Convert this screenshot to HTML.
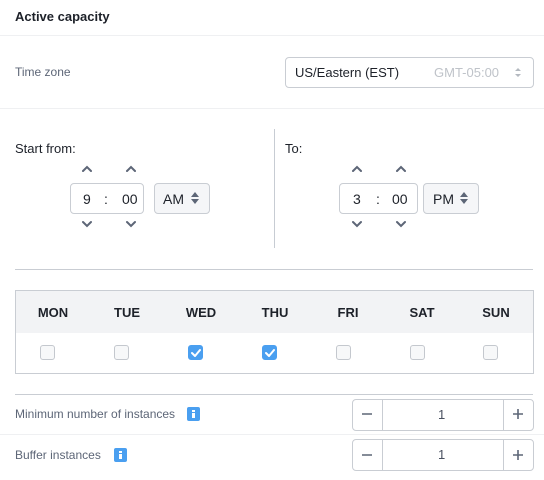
<!DOCTYPE html>
<html><head><style>
*{margin:0;padding:0;box-sizing:border-box}
body{width:544px;height:480px;background:#fff;font-family:"Liberation Sans",sans-serif;position:relative;overflow:hidden;color:#1d2129}
.a{position:absolute}
.hl{position:absolute;height:1px;background:#e9ebee}
.box{position:absolute;border:1px solid #c9cdd3;border-radius:4px;background:#fff}
.t{position:absolute;white-space:nowrap;line-height:1}
.cb{position:absolute;width:15px;height:15px;border:1px solid #c4c8ce;border-radius:3px;background:#f7f8f9;top:345px}
.cb.on{background:#4a9ff0;border-color:#4a9ff0}
.day{position:absolute;top:305px;font-weight:bold;font-size:13px;width:60px;text-align:center}
.info{position:absolute;width:13px;height:14px;background:#4a9ff0;border-radius:2px}
.info:before{content:"";position:absolute;left:5px;top:3px;width:3px;height:2px;background:#fff}
.info:after{content:"";position:absolute;left:5px;top:6px;width:3px;height:5px;background:#fff}
</style></head><body>
<div class="t" style="left:15px;top:10px;font-weight:bold;font-size:13px">Active capacity</div>
<div class="hl" style="left:0;top:35px;width:544px;background:#eff0f2"></div>
<div class="t" style="left:15px;top:66px;font-size:12px;color:#5d6677">Time zone</div>
<div class="box" style="left:285px;top:57px;width:249px;height:31px"></div>
<div class="t" style="left:295px;top:66px;font-size:13px">US/Eastern (EST)</div>
<div class="t" style="left:434px;top:66px;font-size:13px;color:#bfc3c9">GMT-05:00</div>
<svg class="a" style="left:514px;top:67px" width="8" height="11"><path d="M1 4L4 1L7 4Z M1 7L4 10L7 7Z" fill="#b4b9c0"/></svg>
<div class="hl" style="left:0;top:108px;width:544px;background:#eff0f2"></div>
<div class="a" style="left:274px;top:129px;width:1px;height:119px;background:#c7ccd3"></div>
<div class="t" style="left:15px;top:142px;font-size:13px">Start from:</div>
<div class="t" style="left:285px;top:142px;font-size:13px">To:</div>

<svg class="a" style="left:0;top:0" width="544" height="240">
<g fill="none" stroke="#5d6677" stroke-width="2" stroke-linecap="round">
<path d="M83 171l4-4 4 4M127 171l4-4 4 4M353 171l4-4 4 4M397 171l4-4 4 4"/>
<path d="M83 222l4 4 4-4M127 222l4 4 4-4M353 222l4 4 4-4M397 222l4 4 4-4"/>
</g></svg>

<div class="box" style="left:70px;top:183px;width:74px;height:31px"></div>
<div class="t" style="left:83px;top:192px;font-size:14px">9</div>
<div class="t" style="left:104px;top:192px;font-size:14px">:</div>
<div class="t" style="left:122px;top:192px;font-size:14px">00</div>
<div class="box" style="left:154px;top:183px;width:56px;height:31px;background:#f5f6f8"></div>
<div class="t" style="left:163px;top:192px;font-size:14px">AM</div>
<svg class="a" style="left:190px;top:191px" width="10" height="14"><path d="M1 6L5 1L9 6Z M1 8L5 13L9 8Z" fill="#5d6677"/></svg>

<div class="box" style="left:339px;top:183px;width:79px;height:31px"></div>
<div class="t" style="left:353px;top:192px;font-size:14px">3</div>
<div class="t" style="left:376px;top:192px;font-size:14px">:</div>
<div class="t" style="left:392px;top:192px;font-size:14px">00</div>
<div class="box" style="left:423px;top:183px;width:56px;height:31px;background:#f5f6f8"></div>
<div class="t" style="left:433px;top:192px;font-size:14px">PM</div>
<svg class="a" style="left:459px;top:191px" width="10" height="14"><path d="M1 6L5 1L9 6Z M1 8L5 13L9 8Z" fill="#5d6677"/></svg>

<div class="hl" style="left:15px;top:269px;width:518px;background:#c9cdd3"></div>

<div class="a" style="left:15px;top:290px;width:519px;height:84px;border:1px solid #c9cdd3"></div>
<div class="a" style="left:16px;top:291px;width:517px;height:42px;background:#f2f3f5"></div>
<div class="day" style="left:23px">MON</div>
<div class="day" style="left:97px">TUE</div>
<div class="day" style="left:171px">WED</div>
<div class="day" style="left:245px">THU</div>
<div class="day" style="left:318px">FRI</div>
<div class="day" style="left:392px">SAT</div>
<div class="day" style="left:466px">SUN</div>
<div class="cb" style="left:40px"></div>
<div class="cb" style="left:114px"></div>
<div class="cb on" style="left:188px"></div>
<div class="cb on" style="left:262px"></div>
<div class="cb" style="left:336px"></div>
<div class="cb" style="left:410px"></div>
<div class="cb" style="left:483px"></div>
<svg class="a" style="left:0;top:340px" width="544" height="25"><g fill="none" stroke="#fff" stroke-width="2" stroke-linecap="round" stroke-linejoin="round"><path d="M192 13l3 3 5-6M266 13l3 3 5-6"/></g></svg>

<div class="hl" style="left:15px;top:394px;width:518px;background:#c9cdd3"></div>
<div class="t" style="left:15px;top:408px;font-size:12px;color:#5d6677">Minimum number of instances</div>
<div class="info" style="left:187px;top:407px"></div>
<div class="hl" style="left:0;top:434px;width:544px;background:#eff0f2"></div>
<div class="t" style="left:15px;top:449px;font-size:12px;color:#5d6677">Buffer instances</div>
<div class="info" style="left:114px;top:448px"></div>

<div class="box" style="left:352px;top:399px;width:182px;height:32px"></div>
<div class="a" style="left:382px;top:400px;width:1px;height:30px;background:#c9cdd3"></div>
<div class="a" style="left:503px;top:400px;width:1px;height:30px;background:#c9cdd3"></div>
<div class="box" style="left:352px;top:439px;width:182px;height:32px"></div>
<div class="a" style="left:382px;top:440px;width:1px;height:30px;background:#c9cdd3"></div>
<div class="a" style="left:503px;top:440px;width:1px;height:30px;background:#c9cdd3"></div>
<svg class="a" style="left:0;top:395px" width="544" height="80"><g stroke="#5d6677" stroke-width="1.6"><path d="M362 19h10M362 60h10M513 19h10M518 14v10M513 60h10M518 55v10"/></g></svg>
<div class="t" style="left:438px;top:408px;font-size:13px;color:#4a5160">1</div>
<div class="t" style="left:438px;top:448px;font-size:13px;color:#4a5160">1</div>
</body></html>
